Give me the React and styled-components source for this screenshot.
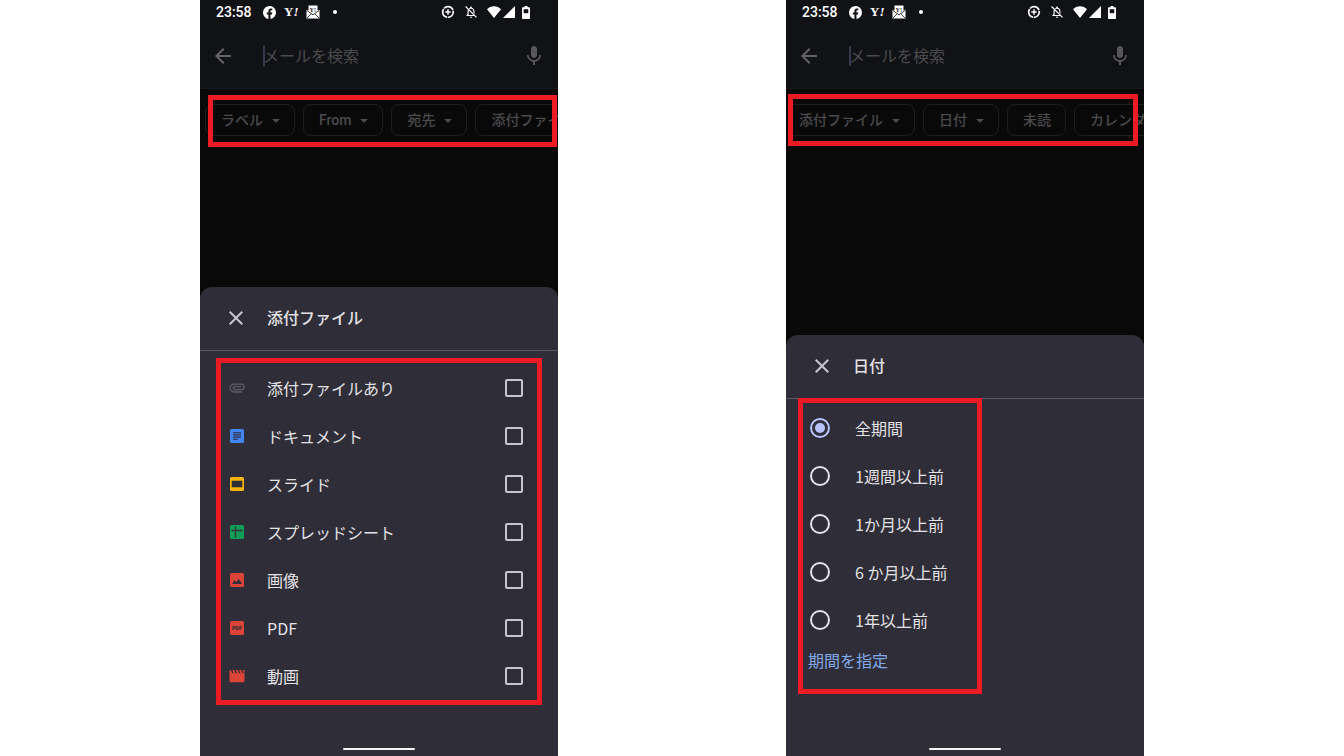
import React from 'react';
import styled, { createGlobalStyle } from 'styled-components';

const GlobalStyle = createGlobalStyle`
* {
    box-sizing: border-box;
}
body {
    margin: 0;
    background: #ffffff;
    font-family: "Noto Sans CJK JP", "Noto Sans", sans-serif;
}
button, input {
    font-family: inherit;
}
`

const Page = styled.main`
display: flex;
justify-content: center;
gap: 228px;
min-height: 100vh;
`

const Phone = styled.section`
display: flex;
flex-direction: column;
flex: 0 1 358px;
min-width: 0;
background: #090909;
overflow: hidden;
`

const TopArea = styled.header`
background: #111216;
border-bottom: 1px solid #17181b;
`

const StatusBar = styled.div`
display: flex;
align-items: center;
justify-content: space-between;
height: 24px;
padding: 0 28px 0 16px;
color: #ffffff;
`

const StatusGroup = styled.div`
display: flex;
align-items: center;
gap: ${props => props.$gap}px;
`

const Clock = styled.span`
font-family: Roboto, sans-serif;
font-size: 14px;
font-weight: 500;
line-height: 24px;
margin-right: 4px;
`

const SearchBar = styled.div`
display: flex;
align-items: center;
height: 64px;
padding: 0 12px 0 11px;
`

const IconButton = styled.button`
display: flex;
padding: 0;
border: 0;
background: none;
color: ${props => props.$color};
`

const Caret = styled.span`
width: 2px;
height: 20px;
margin-left: 28px;
background: #35384f;
`

const SearchInput = styled.input`
flex: 1;
min-width: 0;
height: 32px;
padding: 0 0 2px;
border: 0;
outline: 0;
background: none;
color: #e4e2e6;
font-size: 16px;
margin-left: -2px;

&::placeholder {
    color: #4a4a4d;
    opacity: 1;
}
`

const ChipArea = styled.div`
position: relative;
padding: 15px 0 16px;
`

const ChipRow = styled.div`
display: flex;
gap: 8px;
margin-left: ${props => props.$start}px;
`

const ChipButton = styled.button`
display: flex;
flex: none;
align-items: center;
gap: 9px;
height: 32px;
padding: 0 14px 1px 15px;
border: 1px solid #1e1e20;
border-radius: 8px;
background: none;
color: #4b4b4e;
font-family: Roboto, "Noto Sans CJK JP", sans-serif;
font-size: 14px;
font-weight: 500;
line-height: 20px;
white-space: nowrap;

svg {
    margin-top: 2px;
}
`

const Sheet = styled.div`
margin-top: auto;
padding-bottom: 6px;
border-radius: 12px 12px 0 0;
background: #2f2e38;
color: #e4e2e6;
`

const SheetHeader = styled.div`
display: flex;
align-items: center;
gap: 19px;
height: 64px;
padding: 0 24px 1px;
border-bottom: 1px solid #5c5b64;
`

const SheetTitle = styled.h2`
margin: 0;
padding-bottom: 2px;
font-size: 16px;
font-weight: 500;
line-height: 24px;
`

const SheetBody = styled.div`
position: relative;
padding: ${props => props.$padding};
`

const Row = styled.label`
display: flex;
align-items: center;
height: 48px;
font-size: 16px;
gap: ${props => props.$gap}px;
padding: ${props => props.$padding};
`

const RowText = styled.span`
flex: 1;
`

const Checkbox = styled.input`
appearance: none;
width: 18px;
height: 18px;
margin: 0;
border: 2px solid #c7c5d0;
border-radius: 2px;

&:checked {
    background: #b9c3ff;
}
`

const Radio = styled.input`
appearance: none;
width: 20px;
height: 20px;
margin: 0;
border: 2px solid #e4e2e6;
border-radius: 50%;

&:checked {
    border-color: #b9c3ff;
    background: #b9c3ff;
    background-clip: content-box;
    padding: 3px;
}
`

const RangeLink = styled.a`
display: block;
width: fit-content;
margin-left: 22px;
color: #82a9ea;
font-size: 16px;
line-height: 32px;
text-decoration: none;
`

const HomeBar = styled.div`
width: 72px;
height: 2px;
margin: 0 auto;
background: #f4f4f4;
border-radius: 1px;
`

const Highlight = styled.div`
position: absolute;
inset: ${props => props.$inset};
border: 5px solid #ed1c24;
pointer-events: none;
`

const FacebookIcon = () => (
    <svg width="13" height="13" viewBox="0 0 24 24" fill="currentColor">
        <path d="M24 12a12 12 0 1 0-14 11.900V15.500H7V12h3V9.400c0-3 1.800-4.700 4.600-4.700 1.300 0 2.600.2 2.600.2v3h-1.500c-1.500 0-1.900.9-1.900 1.900V12h3.300l-.5 3.500h-2.800v8.400A12 12 0 0 0 24 12z" />
    </svg>
)

const YahooIcon = () => (
    <svg width="16" height="14" viewBox="0 0 16 14" fill="currentColor">
        <text x="1" y="11" fontFamily="Liberation Serif" fontSize="13" fontWeight="700">
            Y<tspan fontStyle="italic">!</tspan>
        </text>
    </svg>
)

const MailIcon = () => (
    <svg width="14" height="14" viewBox="0 0 14 14">
        <path d="M2.500.5h9v5l2-.8V13.500H.5V4.700l2 .8z" fill="#fff" />
        <path d="M1 5.500l6 4.300 6-4.300M1 13l4.300-4.400M13 13L8.700 8.600" fill="none" stroke="#111216" strokeWidth=".8" />
        <text x="3.600" y="6.500" fontFamily="Liberation Serif" fontSize="6" fontWeight="700" fill="#111216">Y!</text>
    </svg>
)

const DotIcon = () => (
    <svg width="4" height="4" viewBox="0 0 4 4"><circle cx="2" cy="2" r="2" fill="currentColor" /></svg>
)

const DataSaverIcon = () => (
    <svg width="14" height="14" viewBox="0 0 14 14" fill="none" stroke="currentColor">
        <circle cx="7" cy="7" r="5.300" strokeWidth="1.700" strokeDasharray="10.300 .8" strokeDashoffset="2" />
        <path d="M7 4.300v5.400M4.300 7h5.400" strokeWidth="1.500" />
    </svg>
)

const BellOffIcon = () => (
    <svg width="14" height="14" viewBox="0 0 24 24" fill="currentColor">
        <path d="M12 22c1.100 0 2-.9 2-2h-4c0 1.100.9 2 2 2zm4-5H8v-6c0-.7.100-1.300.3-1.900L6.800 7.600C6.300 8.600 6 9.800 6 11v5l-2 2v1h14.200l-2-2H16zM12 6.500c2.500 0 4 2 4 4.500v2.200l2 2V11c0-3.100-1.600-5.600-4.500-6.300V4a1.500 1.500 0 0 0-3 0v.7c-.8.2-1.500.5-2.100.9l1.500 1.500c.6-.4 1.300-.6 2.100-.6zM3.400 1.900L2 3.300 20.700 22l1.400-1.400z" />
    </svg>
)

const WifiIcon = () => (
    <svg width="14" height="12" viewBox="0 0 14 12" fill="currentColor">
        <path d="M7 12L0 3.300C1.800 1.300 4.300.2 7 .2s5.200 1.100 7 3.100z" />
    </svg>
)

const SignalIcon = () => (
    <svg width="12" height="12" viewBox="0 0 12 12" fill="currentColor"><path d="M12 0v12H0z" /></svg>
)

const BatteryIcon = () => (
    <svg width="8" height="13" viewBox="0 0 8 13">
        <path d="M2.500 0h3v1.300H7.200q.8 0 .8.800v10.100q0 .8-.8.800H.8q-.8 0-.8-.8V2.100q0-.8.800-.8h1.700z" fill="currentColor" />
        <path d="M1.700 3.200h4.600v4H1.700z" fill="#111216" />
    </svg>
)

const BackIcon = () => (
    <svg width="24" height="24" viewBox="0 0 24 24" fill="currentColor">
        <path d="M20 11H7.830l5.590-5.590L12 4l-8 8 8 8 1.410-1.410L7.830 13H20v-2z" />
    </svg>
)

const MicIcon = () => (
    <svg width="24" height="24" viewBox="0 0 24 24" fill="currentColor">
        <path d="M12 14c1.660 0 3-1.340 3-3V5c0-1.660-1.340-3-3-3S9 3.340 9 5v6c0 1.660 1.340 3 3 3zM17.300 11c0 3-2.540 5.100-5.300 5.100S6.700 14 6.700 11H5c0 3.410 2.720 6.230 6 6.720V21h2v-3.280c3.280-.48 6-3.300 6-6.720z" />
    </svg>
)

const CloseIcon = () => (
    <svg width="24" height="24" viewBox="0 0 24 24" fill="currentColor">
        <path d="M19 6.410L17.590 5 12 10.590 6.410 5 5 6.410 10.590 12 5 17.590 6.410 19 12 13.410 17.590 19 19 17.590 13.410 12z" />
    </svg>
)

const ArrowIcon = () => (
    <svg width="8" height="4" viewBox="0 0 8 4" fill="currentColor"><path d="M0 0h8L4 4z" /></svg>
)

const ClipIcon = () => (
    <svg width="16" height="14" viewBox="0 0 16 14" fill="none" stroke="#5f5e66" strokeWidth="1.300" strokeLinecap="round">
        <path d="M12.700 11H5a3.900 3.900 0 0 1 0-7.800h7.300a2.700 2.700 0 0 1 0 5.400H5.700a1.500 1.500 0 0 1 0-3h6" />
    </svg>
)

const DocIcon = () => (
    <svg width="14" height="14" viewBox="0 0 14 14">
        <rect width="14" height="14" rx="1.500" fill="#4285f4" />
        <path d="M3 3.700h8M3 5.900h8M3 8.100h8M3 10.300h5" stroke="#2f2e38" strokeWidth="1.100" />
    </svg>
)

const SlideIcon = () => (
    <svg width="14" height="14" viewBox="0 0 14 14">
        <path d="M1.500 0h11A1.500 1.500 0 0 1 14 1.500v11a1.500 1.500 0 0 1-1.500 1.500h-11A1.500 1.500 0 0 1 0 12.500v-11A1.500 1.500 0 0 1 1.500 0zM1.700 3.800v6.400h10.600V3.800z" fill="#f4b400" fillRule="evenodd" />
    </svg>
)

const SheetIcon = () => (
    <svg width="14" height="14" viewBox="0 0 14 14">
        <rect width="14" height="14" rx="1.500" fill="#0f9d58" />
        <path d="M1.500 5.500h11M5.500 1.800v10.400" stroke="#2f2e38" strokeWidth="1.300" />
    </svg>
)

const ImageIcon = () => (
    <svg width="14" height="14" viewBox="0 0 14 14">
        <rect width="14" height="14" rx="1.500" fill="#db4437" />
        <path d="M2 11l2.500-3.700 1.600 2L8.700 6l3.500 5z" fill="#2f2e38" />
    </svg>
)

const PdfIcon = () => (
    <svg width="14" height="14" viewBox="0 0 14 14">
        <rect width="14" height="14" rx="1.500" fill="#db4437" />
        <text x="7" y="9" textAnchor="middle" fontFamily="Roboto" fontSize="5.500" fontWeight="900" fill="#2f2e38">PDF</text>
    </svg>
)

const VideoIcon = () => (
    <svg width="16" height="14" viewBox="0 0 16 14">
        <path d="M.5 2.200Q.5 1 1.700 1L3.400 4.200h1.400L3.200 1h2L6.800 4.200h1.400L6.600 1h2l1.600 3.200h1.400L10 1h2l1.600 3.200H15L13.400 1h2.100v11a1.300 1.300 0 0 1-1.300 1.300H1.800A1.300 1.300 0 0 1 .5 12z" fill="#db4437" />
    </svg>
)

const IconBox = styled.span`
display: flex;
justify-content: center;
width: 14px;

svg {
    flex: none;
}
`

const attachments = [
    { name: '添付ファイルあり', icon: <ClipIcon /> },
    { name: 'ドキュメント', icon: <DocIcon /> },
    { name: 'スライド', icon: <SlideIcon /> },
    { name: 'スプレッドシート', icon: <SheetIcon /> },
    { name: '画像', icon: <ImageIcon /> },
    { name: 'PDF', icon: <PdfIcon /> },
    { name: '動画', icon: <VideoIcon /> },
]

const periods = ['全期間', '1週間以上前', '1か月以上前', '6 か月以上前', '1年以上前']

const Chip = ({ text, menu = true }) => (
    <ChipButton type="button">
        {text}
        {menu && <ArrowIcon />}
    </ChipButton>
)

const Spacer = styled.span`
width: 6px;
`

const PhoneTop = () => (
    <TopArea>
        <StatusBar>
            <StatusGroup $gap={7}>
                <Clock>23:58</Clock>
                <FacebookIcon />
                <YahooIcon />
                <MailIcon />
                <StatusGroup $gap={0}>
                    <Spacer />
                    <DotIcon />
                </StatusGroup>
            </StatusGroup>
            <StatusGroup $gap={7}>
                <StatusGroup $gap={9}>
                    <DataSaverIcon />
                    <BellOffIcon />
                    <StatusGroup $gap={2}>
                        <WifiIcon />
                        <SignalIcon />
                    </StatusGroup>
                </StatusGroup>
                <BatteryIcon />
            </StatusGroup>
        </StatusBar>
        <SearchBar>
            <IconButton type="button" $color="#646467" aria-label="戻る"><BackIcon /></IconButton>
            <Caret />
            <SearchInput type="text" placeholder="メールを検索" aria-label="メールを検索" />
            <IconButton type="button" $color="#58585b" aria-label="音声検索"><MicIcon /></IconButton>
        </SearchBar>
    </TopArea>
)

const SheetTop = ({ title }) => (
    <SheetHeader>
        <IconButton type="button" $color="#c7c5d0" aria-label="閉じる"><CloseIcon /></IconButton>
        <SheetTitle>{title}</SheetTitle>
    </SheetHeader>
)

const AttachmentPhone = () => (
    <Phone>
        <PhoneTop />
        <ChipArea>
            <ChipRow $start={5}>
                <Chip text="ラベル" />
                <Chip text="From" />
                <Chip text="宛先" />
                <Chip text="添付ファイル" />
            </ChipRow>
            <Highlight $inset="6px 1px 5px 8px" />
        </ChipArea>
        <Sheet>
            <SheetTop title="添付ファイル" />
            <SheetBody $padding="13px 0 48px">
                {attachments.map(item => (
                    <Row key={item.name} $gap={23} $padding="0 35px 0 30px">
                        <IconBox>{item.icon}</IconBox>
                        <RowText>{item.name}</RowText>
                        <Checkbox type="checkbox" />
                    </Row>
                ))}
                <Highlight $inset="7px 16px 43px 16px" />
            </SheetBody>
            <HomeBar />
        </Sheet>
    </Phone>
)

const DatePhone = () => (
    <Phone>
        <PhoneTop />
        <ChipArea>
            <ChipRow $start={-3}>
                <Chip text="添付ファイル" />
                <Chip text="日付" />
                <Chip text="未読" menu={false} />
                <Chip text="カレンダーの最新情報を除外" menu={false} />
            </ChipRow>
            <Highlight $inset="5px 6px 6px 2px" />
        </ChipArea>
        <Sheet>
            <SheetTop title="日付" />
            <SheetBody $padding="5px 0 72px">
                {periods.map((period, i) => (
                    <Row key={period} $gap={25} $padding="0 24px">
                        <Radio type="radio" name="period" defaultChecked={i === 0} />
                        <RowText>{period}</RowText>
                    </Row>
                ))}
                <RangeLink href="#range">期間を指定</RangeLink>
                <Highlight $inset="-1px 162px 54px 12px" />
            </SheetBody>
            <HomeBar />
        </Sheet>
    </Phone>
)

class App extends React.Component {
    render() {
        return (
            <Page>
                <GlobalStyle />
                <AttachmentPhone />
                <DatePhone />
            </Page>
        )
    }
}

export default App;
